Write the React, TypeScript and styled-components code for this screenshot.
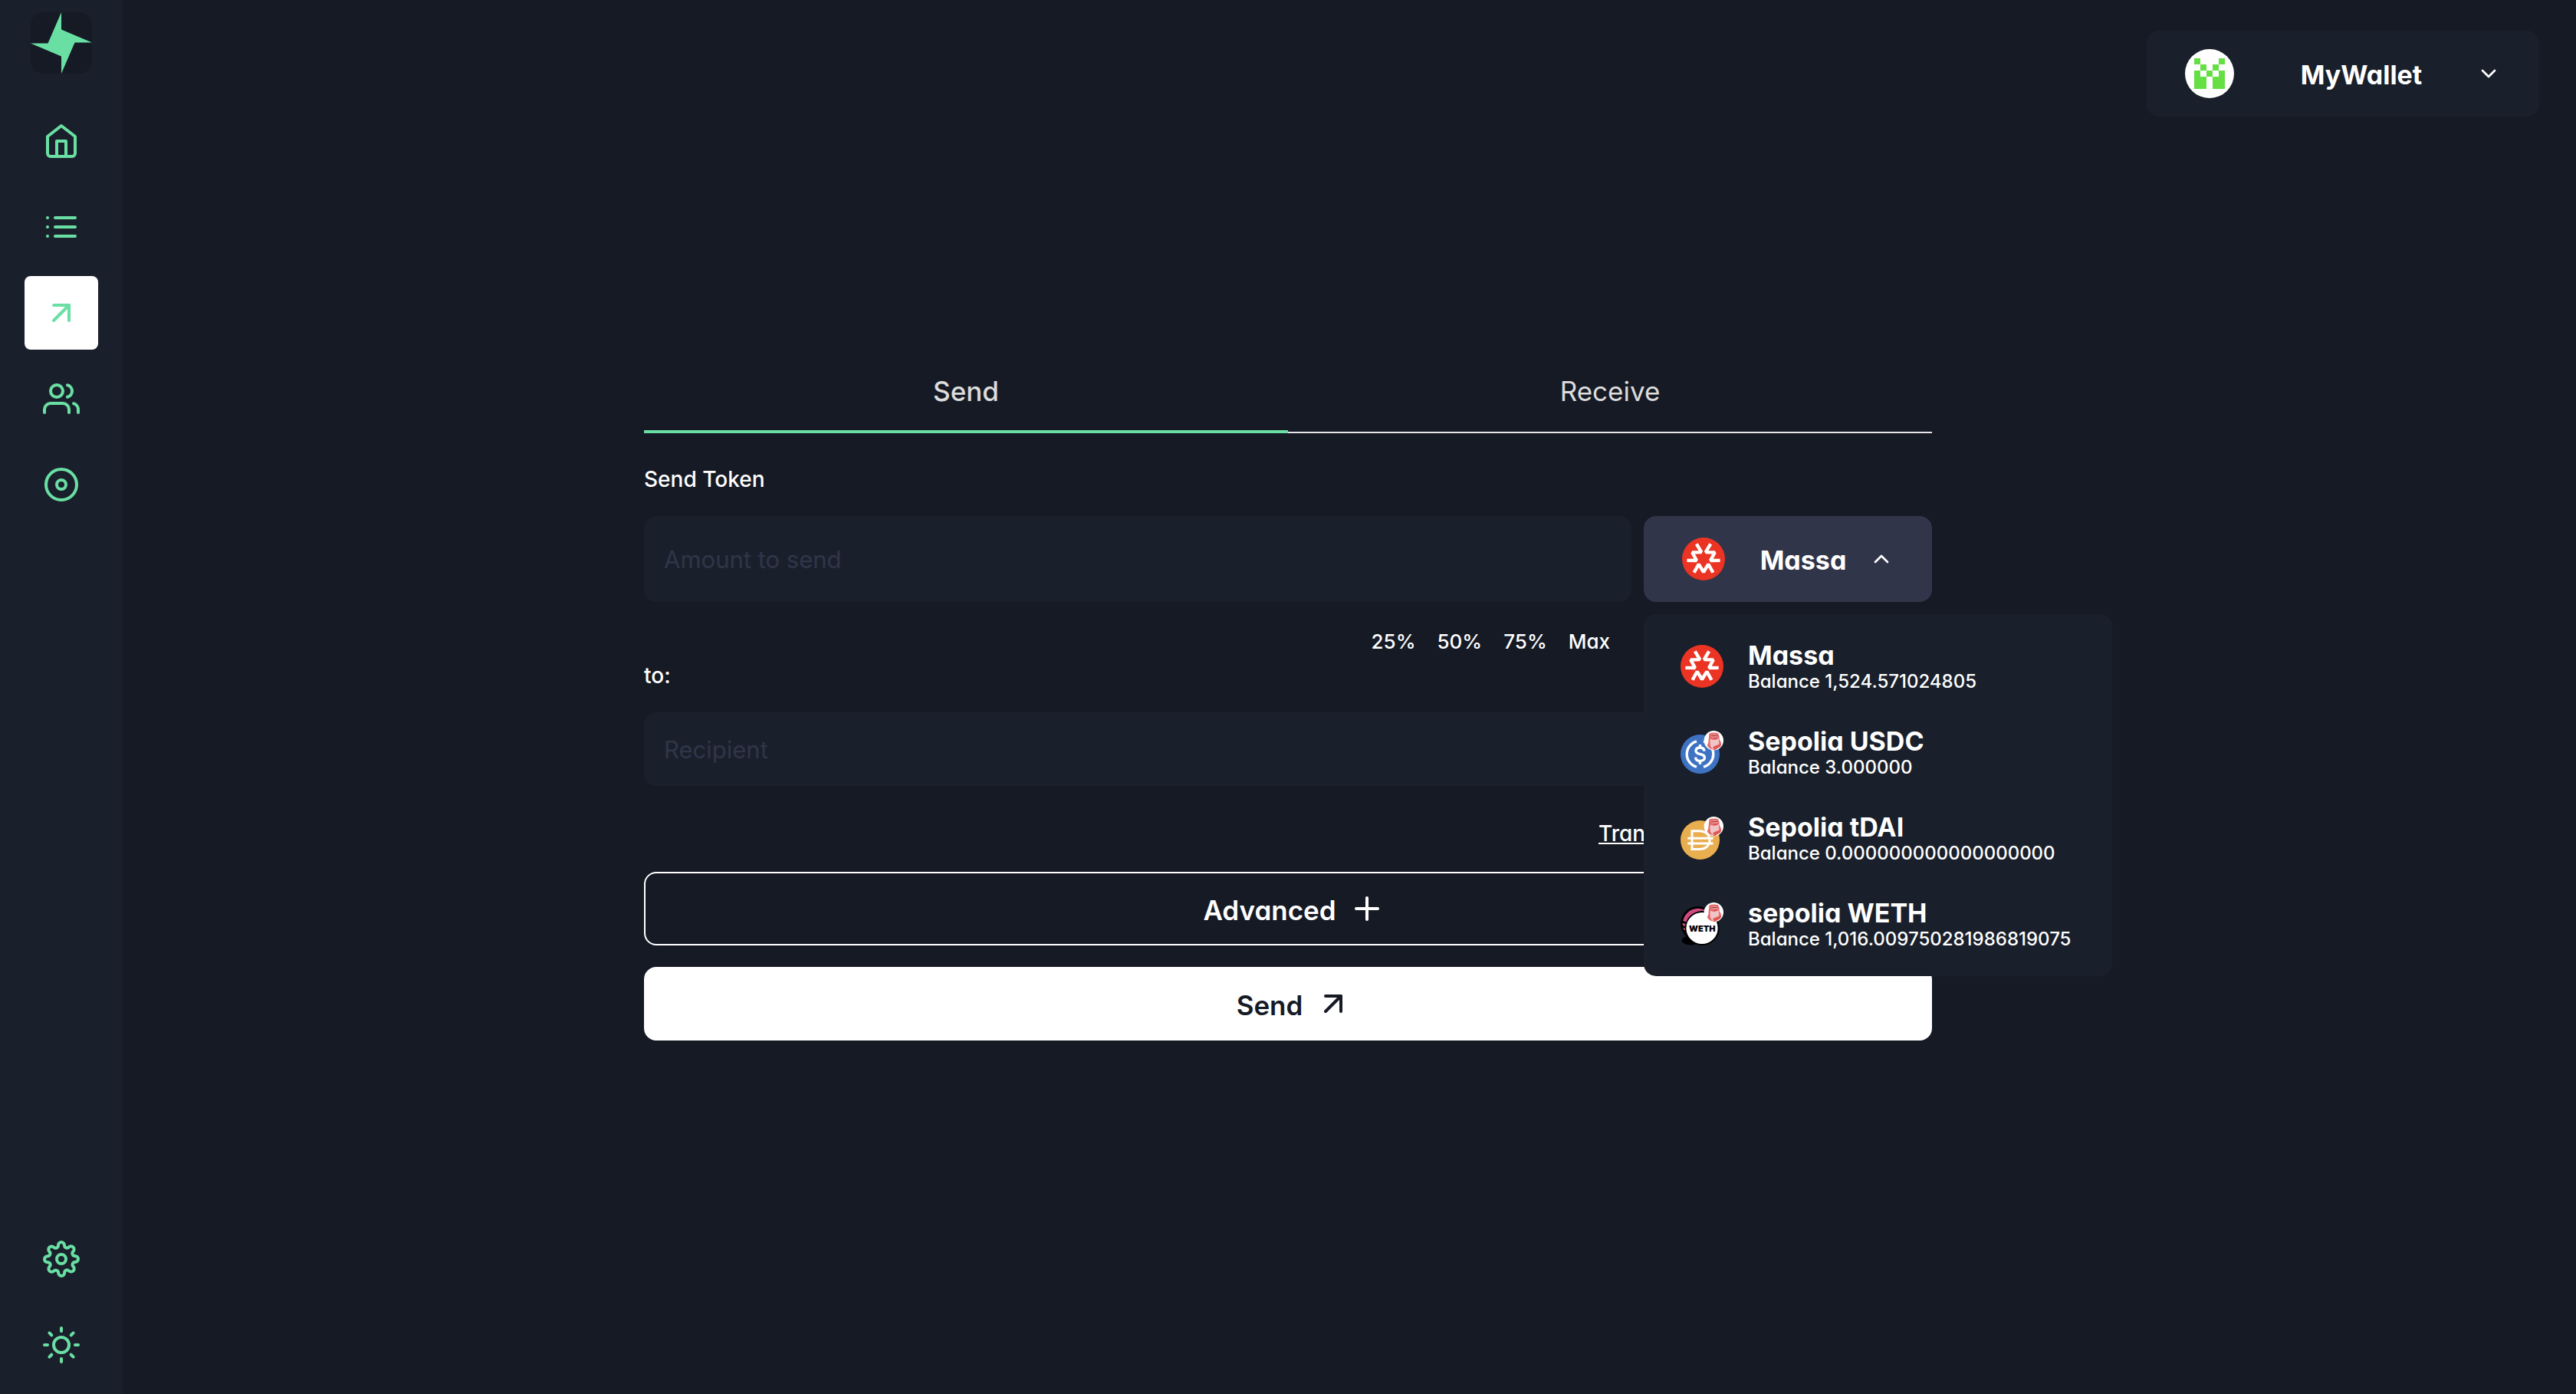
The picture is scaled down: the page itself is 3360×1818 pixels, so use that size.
import React from "react";
import styled, { createGlobalStyle } from "styled-components";
import {
  FiArrowUpRight,
  FiChevronDown,
  FiChevronUp,
  FiDisc,
  FiHome,
  FiList,
  FiPlus,
  FiSettings,
  FiSun,
  FiUsers,
} from "react-icons/fi";

const color = {
  page: "#161a25",
  panel: "#1a202b",
  raised: "#303549",
  brand: "#6adfa4",
  white: "#ffffff",
  muted: "#dcdcdc",
  rule: "#e6e6ea",
};

const GlobalStyle = createGlobalStyle`
  *, *::before, *::after { box-sizing: border-box; }
  body {
    margin: 0;
    background: ${color.page};
    color: ${color.white};
    font-family: Inter, "Liberation Sans", sans-serif;
    font-feature-settings: "cv11";
  }
  button, input { font: inherit; font-feature-settings: inherit; color: inherit; }
  button { border: 0; padding: 0; background: none; cursor: pointer; }
`;

const Shell = styled.div`
  display: flex;
  min-height: 100vh;
`;

const Sidebar = styled.nav`
  display: flex;
  flex-direction: column;
  align-items: center;
  justify-content: space-between;
  flex: none;
  width: 160px;
  padding: 16px 0;
  background: ${color.panel};
`;

const NavGroup = styled.div`
  display: flex;
  flex-direction: column;
  align-items: center;
  gap: 16px;
`;

const LogoLink = styled.a`
  display: block;
  width: 80px;
  height: 80px;
  margin-bottom: 24px;
`;

const NavButton = styled.button<{ $active?: boolean }>`
  display: flex;
  align-items: center;
  justify-content: center;
  width: 96px;
  height: 96px;
  border-radius: 8px;
  color: ${color.brand};
  background: ${(p) => (p.$active ? color.white : "transparent")};
`;

const Main = styled.main`
  display: grid;
  grid-template-rows: 1fr auto 1fr;
  flex: 1;
  min-width: 0;
`;

const Header = styled.header`
  display: flex;
  justify-content: flex-end;
  align-items: flex-start;
  padding: 40px 48px 0;
`;

const Dropdown = styled.div<{ $width: number }>`
  position: relative;
  flex: none;
  width: ${(p) => p.$width}px;
`;

const DropdownButton = styled.button<{ $open?: boolean }>`
  display: flex;
  align-items: center;
  justify-content: space-between;
  width: 100%;
  height: 112px;
  padding: 0 50px;
  border-radius: 16px;
  background: ${(p) => (p.$open ? color.raised : color.panel)};
`;

const DropdownLabel = styled.span`
  padding: 4px 0 0 16px;
  font-size: 34px;
  line-height: 40px;
  font-weight: 700;
`;

const Menu = styled.ul`
  position: absolute;
  z-index: 1;
  top: 128px;
  left: 0;
  min-width: 611px;
  margin: 0;
  padding: 12px 0;
  list-style: none;
  border-radius: 16px;
  background: ${color.panel};
`;

const MenuOption = styled.button`
  display: flex;
  align-items: center;
  gap: 32px;
  width: 100%;
  height: 112px;
  padding: 0 48px;
  text-align: left;
  white-space: nowrap;
`;

const OptionText = styled.span`
  display: flex;
  flex-direction: column;
  padding-top: 4px;
`;

const OptionName = styled.span`
  font-size: 34px;
  line-height: 36px;
  font-weight: 700;
`;

const OptionBalance = styled.span`
  font-size: 24px;
  line-height: 32px;
  font-weight: 500;
`;

const Form = styled.form`
  display: flex;
  flex-direction: column;
  width: 50vw;
  margin: 0 160px 0 0;
  justify-self: center;
`;

const Tabs = styled.div`
  display: grid;
  grid-template-columns: 1fr 1fr;
  height: 104px;
  margin-bottom: 40px;
`;

const Tab = styled.button<{ $active?: boolean }>`
  padding-bottom: 6px;
  font-size: 35px;
  line-height: 40px;
  font-weight: ${(p) => (p.$active ? 500 : 400)};
  color: ${color.muted};
  box-shadow: inset 0 ${(p) => (p.$active ? "-4px" : "-2px")} 0
    ${(p) => (p.$active ? color.brand : color.rule)};
`;

const FieldLabel = styled.label`
  margin-bottom: 28px;
  font-size: 28px;
  line-height: 40px;
  font-weight: 500;
`;

const AmountRow = styled.div`
  display: flex;
  align-items: flex-start;
  gap: 16px;
  margin-bottom: 4px;
`;

const AmountColumn = styled.div`
  display: flex;
  flex-direction: column;
  flex: 1;
  gap: 32px;
`;

const TextInput = styled.input<{ $height: number }>`
  width: 100%;
  height: ${(p) => p.$height}px;
  padding: 0 26px;
  border: 0;
  border-radius: 16px;
  outline: 0;
  font-size: 31px;
  font-feature-settings: normal;
  background: ${color.panel};

  &::placeholder {
    color: ${color.raised};
    opacity: 1;
  }
`;

const Shares = styled.div`
  display: flex;
  justify-content: flex-end;
  gap: 28px;
  padding-right: 28px;
`;

const ShareButton = styled.button`
  font-size: 26px;
  line-height: 40px;
  font-weight: 500;
`;

const TransferRow = styled.div`
  display: flex;
  padding: 42px 0 30px 1245px;
`;

const TransferLink = styled.a`
  font-size: 28px;
  line-height: 40px;
  font-weight: 500;
  color: ${color.white};
  text-decoration: underline;
`;

const ActionButton = styled.button<{ $solid?: boolean }>`
  display: flex;
  align-items: center;
  justify-content: center;
  gap: 16px;
  height: 96px;
  padding-left: 16px;
  border: 2px solid ${color.white};
  border-radius: 16px;
  color: ${(p) => (p.$solid ? color.page : color.white)};
  background: ${(p) => (p.$solid ? color.white : "transparent")};

  & + & {
    margin-top: 28px;
  }
`;

const ActionLabel = styled.span`
  padding-top: 4px;
  font-size: 35px;
  line-height: 40px;
  font-weight: 600;
`;

const Drawing = styled.svg`
  display: block;
  flex: none;
`;

const StationLogo = () => (
  <Drawing width="80" height="80" viewBox="0 0 80 80" aria-hidden="true">
    <rect width="80" height="80" rx="16" fill={color.page} />
    <path
      d="M40 0V22.5L80 39.5H57.5L40 80V57.5L0 40.5H22.5Z"
      fill={color.brand}
    />
  </Drawing>
);

const identicon = ["10001", "01010", "10101", "11011", "11011"];

const Avatar = () => (
  <Drawing width="64" height="64" viewBox="0 0 64 64" aria-hidden="true">
    <circle cx="32" cy="32" r="32" fill="#fff" />
    <g fill="#66df45" shapeRendering="crispEdges">
      {identicon.flatMap((row, y) =>
        [...row].map((cell, x) =>
          cell === "1" ? (
            <rect
              key={`${x}-${y}`}
              x={12 + x * 8}
              y={12 + y * 8}
              width="8"
              height="8"
            />
          ) : null
        )
      )}
    </g>
  </Drawing>
);

const MassaIcon = () => (
  <Drawing width="56" height="56" viewBox="0 0 56 56" aria-hidden="true">
    <circle cx="28" cy="28" r="28" fill="#eb3423" />
    <g fill="none" stroke="#fff" strokeWidth="4.4" strokeLinejoin="bevel">
      {[0, 120, 240].map((angle) => (
        <path
          key={angle}
          transform={`rotate(${angle} 28 28)`}
          d="M15.6 45.8L21.7 34.8L28 45L34.3 34.8L40.4 45.8"
        />
      ))}
    </g>
  </Drawing>
);

const ChainBadge = () => (
  <g>
    <circle cx="43.3" cy="12.7" r="12.7" fill="#fff" />
    <path
      d="M37.5 3.6Q43 1.4 49 3.2Q51 6 50.6 11Q53.5 15 53.2 18.5Q50 22.5 45 25.2Q38 24.6 34.8 19.5Q37 15 36.8 10Z"
      fill="#e46a68"
    />
    <path
      d="M38.8 10.5Q44 13.5 49.6 10Q50.8 15 49.8 18.8Q46.5 24.4 41.6 23.8Q37.4 20 38.8 10.5Z"
      fill="#f0c3c6"
    />
    <path d="M39.5 5.4Q44 3.8 49 5.6L48.6 8.8Q46 10.4 43.6 8.8L40 8.2Z" fill="#e89a9b" />
    <path d="M40.2 6.6H48.6" stroke="#a8353a" strokeWidth="1.1" />
    <path d="M44 9.4Q45.6 10.6 47.4 9.4" fill="none" stroke="#cf2f33" strokeWidth="1.2" />
    <path d="M42 21.2L48 18.4L53 17.6L52 21L44 24.6Z" fill="#df5654" />
  </g>
);

const UsdcIcon = () => (
  <Drawing width="56" height="56" viewBox="0 0 56 56" aria-hidden="true">
    <circle cx="25.5" cy="30.5" r="25.5" fill="#3e73c4" />
    <g fill="none" stroke="#fff" strokeWidth="3.4">
      <path d="M21 13.8A17.3 17.3 0 0 0 21 47.2" />
      <path d="M30 13.8A17.3 17.3 0 0 1 30 47.2" />
      <path d="M25.5 18V22M25.5 39V43.8" />
      <path d="M31 26.6C30.8 23.6 28.6 22 25.5 22C22.2 22 20 23.6 20 26.2C20 32.6 31.4 28.4 31.4 35C31.4 37.8 29 39.4 25.6 39.4C22 39.4 19.8 37.6 19.6 34.6" />
    </g>
    <ChainBadge />
  </Drawing>
);

const DaiIcon = () => (
  <Drawing width="56" height="56" viewBox="0 0 56 56" aria-hidden="true">
    <circle cx="25.5" cy="30.5" r="25.5" fill="#e8ae50" />
    <g fill="none" stroke="#fff" strokeWidth="3">
      <path d="M15 18.8H24.5C33 18.8 38 24 38 30.7C38 37.4 33 42.6 24.5 42.6H15Z" />
      <path d="M9.3 28.2H42.6M9.3 35H42.6" />
    </g>
    <ChainBadge />
  </Drawing>
);

const WethText = styled.text`
  font-size: 11px;
  font-weight: 900;
  text-anchor: middle;
`;

const WethIcon = () => (
  <Drawing width="56" height="56" viewBox="0 0 56 56" aria-hidden="true">
    <ellipse cx="13" cy="49.6" rx="11.5" ry="6" fill="#000" />
    <circle cx="22.5" cy="27.5" r="22.5" fill="#000" />
    <circle cx="22.8" cy="27.8" r="20" fill="#cf4a80" />
    <path
      d="M2 25L8 27M2 31L8 33M4 37L10 38M7 43L12 42"
      stroke="#000"
      strokeWidth="2.4"
    />
    <circle cx="28.2" cy="33.5" r="22.5" fill="#000" />
    <circle cx="28" cy="33.5" r="20.6" fill="#fff" />
    <WethText x="28.3" y="38">
      WETH
    </WethText>
    <ChainBadge />
  </Drawing>
);

const tokens = [
  { name: "Massa", balance: "1,524.571024805", Icon: MassaIcon },
  { name: "Sepolia USDC", balance: "3.000000", Icon: UsdcIcon },
  { name: "Sepolia tDAI", balance: "0.000000000000000000", Icon: DaiIcon },
  { name: "sepolia WETH", balance: "1,016.009750281986819075", Icon: WethIcon },
];

const topNav = [
  { label: "Home", Icon: FiHome },
  { label: "Transactions", Icon: FiList },
  { label: "Send and receive", Icon: FiArrowUpRight, active: true },
  { label: "Contacts", Icon: FiUsers },
  { label: "Assets", Icon: FiDisc },
];

const bottomNav = [
  { label: "Settings", Icon: FiSettings },
  { label: "Theme", Icon: FiSun },
];

export default function App() {
  return (
    <>
      <GlobalStyle />
      <Shell>
        <Sidebar>
          <NavGroup>
            <LogoLink href="#" aria-label="Station">
              <StationLogo />
            </LogoLink>
            {topNav.map(({ label, Icon, active }) => (
              <NavButton key={label} type="button" aria-label={label} $active={active}>
                <Icon size={48} />
              </NavButton>
            ))}
          </NavGroup>
          <NavGroup>
            {bottomNav.map(({ label, Icon }) => (
              <NavButton key={label} type="button" aria-label={label}>
                <Icon size={48} />
              </NavButton>
            ))}
          </NavGroup>
        </Sidebar>

        <Main>
          <Header>
            <Dropdown $width={512}>
              <DropdownButton type="button" aria-haspopup="listbox">
                <Avatar />
                <DropdownLabel>MyWallet</DropdownLabel>
                <FiChevronDown size={32} />
              </DropdownButton>
            </Dropdown>
          </Header>

          <Form onSubmit={(event) => event.preventDefault()}>
            <Tabs role="tablist">
              <Tab type="button" role="tab" aria-selected="true" $active>
                Send
              </Tab>
              <Tab type="button" role="tab" aria-selected="false">
                Receive
              </Tab>
            </Tabs>

            <FieldLabel htmlFor="amount">Send Token</FieldLabel>
            <AmountRow>
              <AmountColumn>
                <TextInput id="amount" $height={112} placeholder="Amount to send" />
                <Shares>
                  {["25%", "50%", "75%", "Max"].map((share) => (
                    <ShareButton key={share} type="button">
                      {share}
                    </ShareButton>
                  ))}
                </Shares>
              </AmountColumn>
              <Dropdown $width={376}>
                <DropdownButton
                  type="button"
                  aria-haspopup="listbox"
                  aria-expanded="true"
                  $open
                >
                  <MassaIcon />
                  <DropdownLabel>Massa</DropdownLabel>
                  <FiChevronUp size={32} />
                </DropdownButton>
                <Menu>
                  {tokens.map(({ name, balance, Icon }) => (
                    <li key={name}>
                      <MenuOption type="button">
                        <Icon />
                        <OptionText>
                          <OptionName>{name}</OptionName>
                          <OptionBalance>Balance {balance}</OptionBalance>
                        </OptionText>
                      </MenuOption>
                    </li>
                  ))}
                </Menu>
              </Dropdown>
            </AmountRow>

            <FieldLabel htmlFor="recipient">to:</FieldLabel>
            <TextInput id="recipient" $height={96} placeholder="Recipient" />
            <TransferRow>
              <TransferLink href="#">Tran</TransferLink>
            </TransferRow>

            <ActionButton type="button">
              <ActionLabel>Advanced</ActionLabel>
              <FiPlus size={48} />
            </ActionButton>
            <ActionButton type="submit" $solid>
              <ActionLabel>Send</ActionLabel>
              <FiArrowUpRight size={48} />
            </ActionButton>
          </Form>
        </Main>
      </Shell>
    </>
  );
}
